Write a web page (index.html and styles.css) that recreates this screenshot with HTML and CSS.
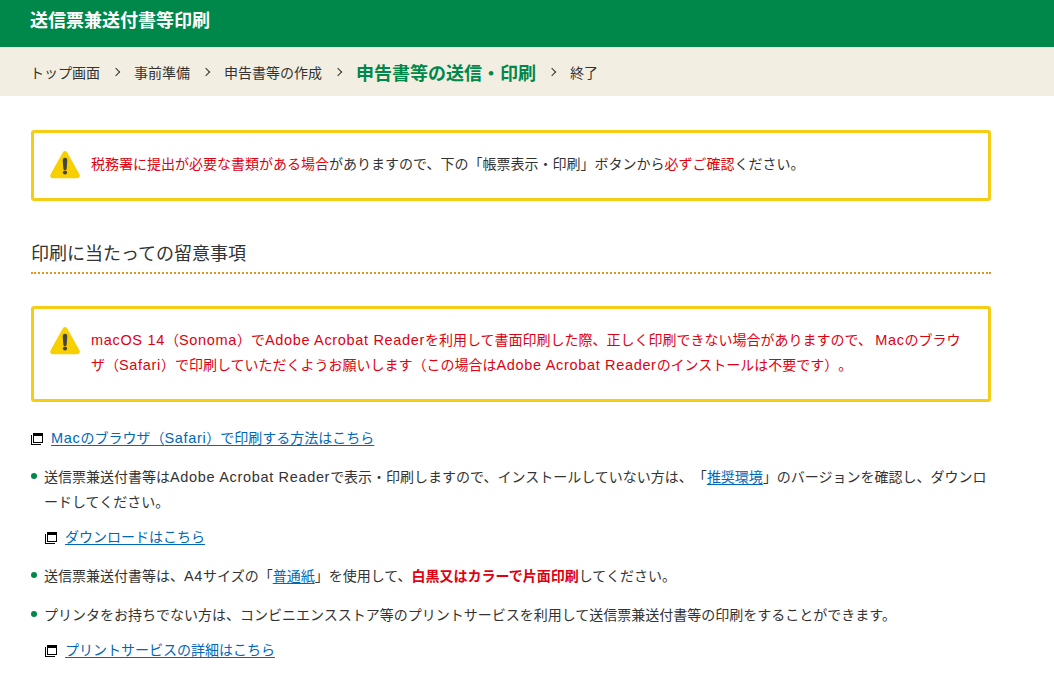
FILE: index.html
```
<!DOCTYPE html>
<html lang="ja">

<head>
    <meta charset="UTF-8">
    <meta name="viewport" content="width=device-width, initial-scale=1">
    <title>送信票兼送付書等印刷</title>
    <link rel="stylesheet" href="styles.css">
</head>

<body>
    <header class="page-header">
        <h1>送信票兼送付書等印刷</h1>
    </header>
    <nav>
        <ol class="steps">
            <li>トップ画面</li>
            <li>事前準備</li>
            <li>申告書等の作成</li>
            <li class="current">申告書等の送信・印刷</li>
            <li>終了</li>
        </ol>
    </nav>
    <svg class="symbols" width="0" height="0">
        <symbol id="icon-warning" viewBox="0 0 30 28">
            <path d="M15 3 L27 24.5 H3 Z" fill="#f8cf00" stroke="#f8cf00" stroke-width="5.5" stroke-linejoin="round" />
            <path d="M12.7 9 a2.3 2.3 0 0 1 4.6 0 L16.7 17.5 a1.7 1.7 0 0 1 -3.4 0 Z" fill="#444" />
            <circle cx="15" cy="21.5" r="2.1" fill="#444" />
        </symbol>
        <symbol id="icon-window" viewBox="0 0 12 12">
            <path d="M0 2h1v9h9v1H0zM2 0h10v10H2zM3 3v6h8V3z" fill="#000" fill-rule="evenodd" />
        </symbol>
    </svg>
    <main>
        <div class="notice">
            <svg class="warning"><use href="#icon-warning" /></svg>
            <p><span class="red">税務署に提出が必要な書類がある場合</span>がありますので、下の「帳票表示・印刷」ボタンから<span class="red">必ずご確認</span>ください。</p>
        </div>

        <h2>印刷に当たっての留意事項</h2>

        <div class="notice notice-large">
            <svg class="warning"><use href="#icon-warning" /></svg>
            <p class="red"><span class="en">macOS 14</span>（<span class="en">Sonoma</span>）で<span class="en">Adobe Acrobat Reader</span>を利用して書面印刷した際、正しく印刷できない場合がありますので、 <span class="en">Mac</span>のブラウ<br>ザ（<span class="en">Safari</span>）で印刷していただくようお願いします（この場合は<span class="en">Adobe Acrobat Reader</span>のインストールは不要です）。</p>
        </div>

        <p class="link-row">
            <svg class="window"><use href="#icon-window" /></svg>
            <a href="#"><span class="en">Mac</span>のブラウザ（<span class="en">Safari</span>）で印刷する方法はこちら</a>
        </p>

        <ul class="notes">
            <li>
                <p>送信票兼送付書等は<span class="en">Adobe Acrobat Reader</span>で表示・印刷しますので、インストールしていない方は、「<a href="#">推奨環境</a>」のバージョンを確認し、ダウンロ<br>ードしてください。</p>
                <p class="link-row">
                    <svg class="window"><use href="#icon-window" /></svg>
                    <a href="#">ダウンロードはこちら</a>
                </p>
            </li>
            <li>
                <p>送信票兼送付書等は、<span class="en">A4</span>サイズの「<a href="#">普通紙</a>」を使用して、<strong class="red">白黒又はカラーで片面印刷</strong>してください。</p>
            </li>
            <li>
                <p>プリンタをお持ちでない方は、コンビニエンスストア等のプリントサービスを利用して送信票兼送付書等の印刷をすることができます。</p>
                <p class="link-row">
                    <svg class="window"><use href="#icon-window" /></svg>
                    <a href="#">プリントサービスの詳細はこちら</a>
                </p>
            </li>
        </ul>
    </main>
</body>

</html>
```
FILE: styles.css
```
body,
h1,
h2,
p,
ol,
ul {
    margin: 0;
    padding: 0;
}

body {
    font-family: "Noto Sans CJK JP", sans-serif;
    font-size: 14px;
    line-height: 25px;
    color: #333;
    background: #fff;
    text-spacing-trim: space-all;
    overflow: hidden;
}

ol,
ul {
    list-style: none;
}

a {
    color: #0068b7;
    text-decoration: underline;
    text-underline-offset: 2px;
}

.symbols {
    position: absolute;
}

.en {
    font-family: "Liberation Sans", sans-serif;
    font-size: 14.5px;
    line-height: 1;
    letter-spacing: 0.67px;
}

.red {
    color: #e0000f;
}

.page-header {
    height: 47px;
    padding-left: 30px;
    background: #00874a;
    box-sizing: border-box;
}

.page-header h1 {
    font-size: 18px;
    line-height: 38px;
    color: #fff;
}

.steps {
    display: flex;
    align-items: center;
    height: 49px;
    padding: 1px 0 0 30px;
    background: #f2efe2;
    box-sizing: border-box;
}

.steps li {
    display: flex;
    align-items: center;
}

.steps li + li::before {
    content: "";
    width: 5px;
    height: 5px;
    margin: 0 15px 0 13px;
    border-top: 1.5px solid #333;
    border-right: 1.5px solid #333;
    transform: rotate(45deg);
}

.steps .current {
    font-size: 18px;
    font-weight: bold;
    color: #00874a;
}

main {
    width: 960px;
    margin: 34px 0 0 31px;
}

.notice {
    display: flex;
    gap: 11px;
    height: 71px;
    padding: 18px 16px 0;
    border: 3px solid #f5cd15;
    border-radius: 3px;
    box-sizing: border-box;
}

.notice p {
    white-space: nowrap;
}

.notice-large {
    height: 96px;
}

.warning {
    flex: none;
    width: 30px;
    height: 28px;
}

h2 {
    height: 33px;
    margin: 38px 0 32px;
    border-bottom: 2px dotted #e0951f;
    font-size: 18px;
    font-weight: normal;
    line-height: 27px;
}

.link-row {
    display: flex;
    align-items: center;
    gap: 8px;
}

.notice + .link-row {
    margin-top: 23px;
}

.window {
    width: 12px;
    height: 12px;
    margin-top: 2px;
}

.notes li {
    position: relative;
    margin-top: 14px;
    padding-left: 13px;
    white-space: nowrap;
}

.notes li::before {
    content: "";
    position: absolute;
    top: 9px;
    left: 0;
    width: 6px;
    height: 6px;
    border-radius: 50%;
    background: #00874a;
}

.notes .link-row {
    margin-top: 10px;
    padding-left: 1px;
}
```
